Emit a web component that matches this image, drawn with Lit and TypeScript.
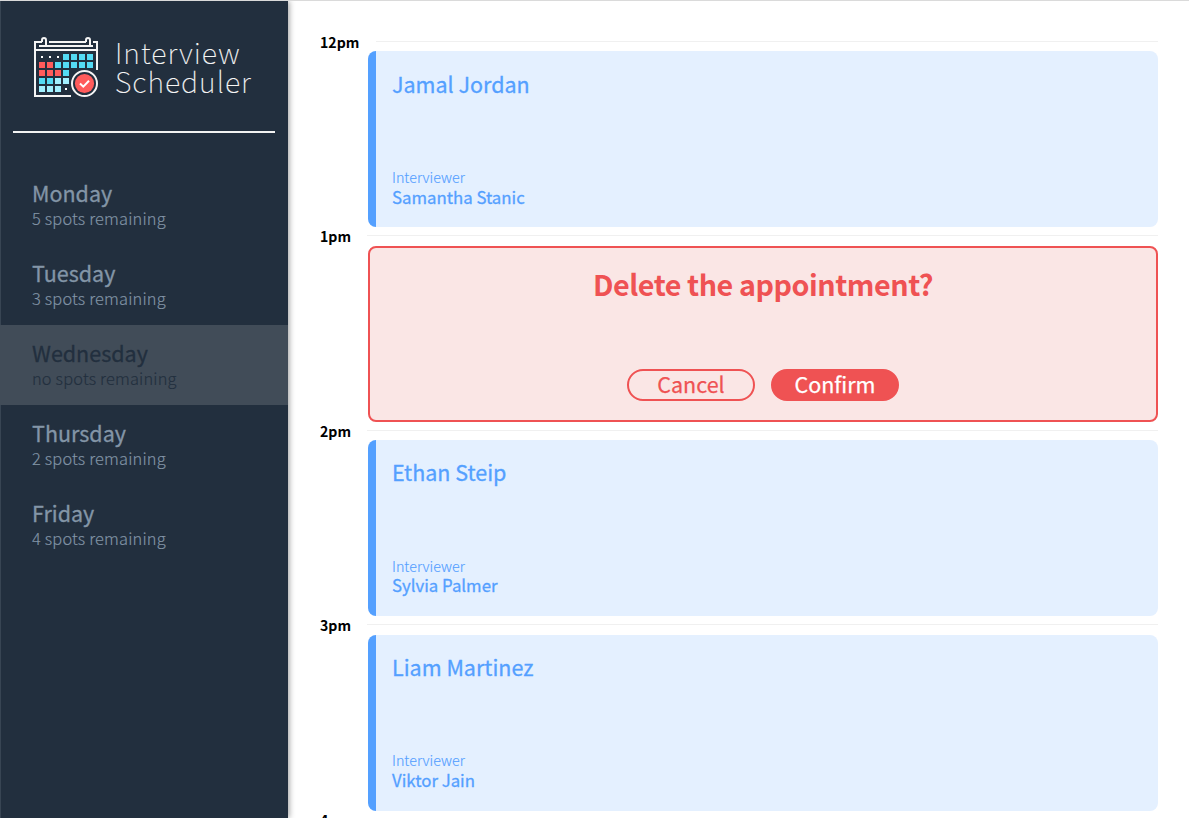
import { LitElement, html, svg, css } from "lit";
import { customElement } from "lit/decorators.js";

const DAYS = [
  { name: "Monday", spots: "5 spots remaining" },
  { name: "Tuesday", spots: "3 spots remaining" },
  { name: "Wednesday", spots: "no spots remaining", full: true },
  { name: "Thursday", spots: "2 spots remaining" },
  { name: "Friday", spots: "4 spots remaining" },
];

const SLOTS = [
  { time: "12pm", student: "Jamal Jordan", interviewer: "Samantha Stanic" },
  { time: "1pm", confirm: true },
  { time: "2pm", student: "Ethan Steip", interviewer: "Sylvia Palmer" },
  { time: "3pm", student: "Liam Martinez", interviewer: "Viktor Jain" },
  { time: "4pm" },
];

// d = dot, c = cyan, r = red, l = light cyan
const CELLS = ["dddcccc", "rrccccc", "rrrc", "ccll", "llld"];
const FILL: Record<string, string> = { c: "#54dbf4", r: "#ff5b5b", l: "#a2f0ff", d: "#ffffff" };

@customElement("calendar-logo")
export class CalendarLogo extends LitElement {
  static styles = css`
    :host { display: block; width: 64px; height: 60px; flex: none; }
    svg { display: block; overflow: visible; }
  `;
  render() {
    return html`<svg width="64" height="60" viewBox="0 0 64 60">
      <g fill="none" stroke="#f5f5f5" stroke-width="2">
        <path d="M8 5H1V59H37M15 5H52M59 5H63V33M5 9H59M1 13H63" />
        <path d="M8 5V3.2a2 2.2 0 0 1 4 0V8M52 5V3.2a2 2.2 0 0 1 4 0V8" />
        <circle cx="50.5" cy="46.5" r="12.5" />
      </g>
      ${CELLS.map((row, y) =>
        [...row].map((c, x) => {
          const s = c === "d" ? 2 : 6;
          const o = c === "d" ? 2 : 0;
          return svg`<rect x=${5 + x * 8 + o} y=${17 + y * 8 + o} width=${s} height=${s} fill=${FILL[c]} />`;
        })
      )}
      <circle cx="50.5" cy="46.5" r="9.6" fill="#ff5b5b" />
      <path d="M46 46.5L49.3 49.7L55 43.8" fill="none" stroke="#fff" stroke-width="2" />
    </svg>`;
  }
}

@customElement("app-root")
export class AppRoot extends LitElement {
  static styles = css`
    :host {
      display: block;
      height: 818px;
      overflow: hidden;
      box-sizing: border-box;
      border-top: 1px solid #dadada;
      background: #fff;
      font-family: "Noto Sans CJK SC", "Noto Sans", sans-serif;
      white-space: nowrap;
    }
    * { box-sizing: border-box; }
    .layout { display: flex; height: 817px; }
    .sidebar {
      width: 288px;
      flex: none;
      background: #222f3e;
      border-left: 1px solid #384553;
      box-shadow: 1px 0 6px rgba(0, 0, 0, 0.4);
    }
    .brand { display: flex; padding: 36px 0 0 33px; height: 130px; }
    .title {
      margin: 0 0 0 17px;
      font-size: 28.7px;
      line-height: 29px;
      font-weight: 100;
      letter-spacing: 1px;
      color: #f5f5f5;
      -webkit-text-stroke: 0.15px currentColor;
    }
    .rule { height: 2px; margin: 0 13px 32px 12px; background: #f2f2f2; }
    .day { height: 80px; padding: 14px 0 0 32px; margin-left: -1px; color: #8395a7; }
    .name {
      font-size: 21.5px;
      line-height: 28px;
      font-weight: 400;
      -webkit-text-stroke: 0.3px currentColor;
    }
    .spots {
      font-size: 16.4px;
      line-height: 22px;
      font-weight: 300;
      letter-spacing: 0.17px;
      -webkit-text-stroke: 0.15px currentColor;
    }
    .full { background: #414c58; color: #222f3e; }
    .schedule { flex: 1; padding: 32px 31px 0 32px; }
    .slot { height: 194.4px; }
    .hour { display: flex; height: 18.4px; gap: 16.5px; }
    .time { font-size: 14.1px; line-height: 18px; font-weight: 700; color: #000; }
    .line { flex: 1; height: 1px; margin-top: 8px; background: #f0f0f0; }
    .card {
      display: flex;
      flex-direction: column;
      height: 176px;
      margin-left: 48px;
      border-radius: 8px;
    }
    .show {
      background: #e4f0ff;
      border-left: 8px solid #54a0ff;
      color: #54a0ff;
      padding: 16.2px 16px 20.8px;
    }
    .student {
      font-size: 21.5px;
      line-height: 32px;
      font-weight: 400;
      -webkit-text-stroke: 0.3px currentColor;
    }
    .label {
      font-size: 14.3px;
      line-height: 20px;
      font-weight: 300;
      margin-top: auto;
      margin-bottom: -0.4px;
      -webkit-text-stroke: 0.15px currentColor;
    }
    .interviewer {
      font-size: 16.8px;
      line-height: 20px;
      font-weight: 400;
      -webkit-text-stroke: 0.3px currentColor;
    }
    .confirm {
      align-items: center;
      justify-content: space-between;
      padding: 16px 0 19px;
      background: #fae6e5;
      border: 2px solid #ef5253;
      color: #ef5253;
    }
    .question { font-size: 28.7px; line-height: 40px; font-weight: 700; letter-spacing: -0.45px; }
    .actions { display: flex; gap: 16px; }
    .button {
      width: 128px;
      height: 32px;
      padding: 0 0 2px;
      border: 2px solid #ef5253;
      border-radius: 16px;
      background: transparent;
      color: #ef5253;
      font: 400 21.5px/26px "Noto Sans CJK SC", sans-serif;
      -webkit-text-stroke: 0.25px currentColor;
    }
    .solid { background: #ef5253; color: #fff; }
  `;

  private card(s: (typeof SLOTS)[number]) {
    if (s.confirm)
      return html`<div class="card confirm">
        <div class="question">Delete the appointment?</div>
        <div class="actions">
          <button class="button">Cancel</button>
          <button class="button solid">Confirm</button>
        </div>
      </div>`;
    if (!s.student) return null;
    return html`<div class="card show">
      <div class="student">${s.student}</div>
      <div class="label">Interviewer</div>
      <div class="interviewer">${s.interviewer}</div>
    </div>`;
  }

  render() {
    return html`<div class="layout">
      <nav class="sidebar">
        <div class="brand">
          <calendar-logo></calendar-logo>
          <div class="title">Interview<br />Scheduler</div>
        </div>
        <div class="rule"></div>
        ${DAYS.map(
          (d) => html`<div class="day ${d.full ? "full" : ""}">
            <div class="name">${d.name}</div>
            <div class="spots">${d.spots}</div>
          </div>`
        )}
      </nav>
      <main class="schedule">
        ${SLOTS.map(
          (s) => html`<section class="slot">
            <div class="hour"><span class="time">${s.time}</span><span class="line"></span></div>
            ${this.card(s)}
          </section>`
        )}
      </main>
    </div>`;
  }
}
